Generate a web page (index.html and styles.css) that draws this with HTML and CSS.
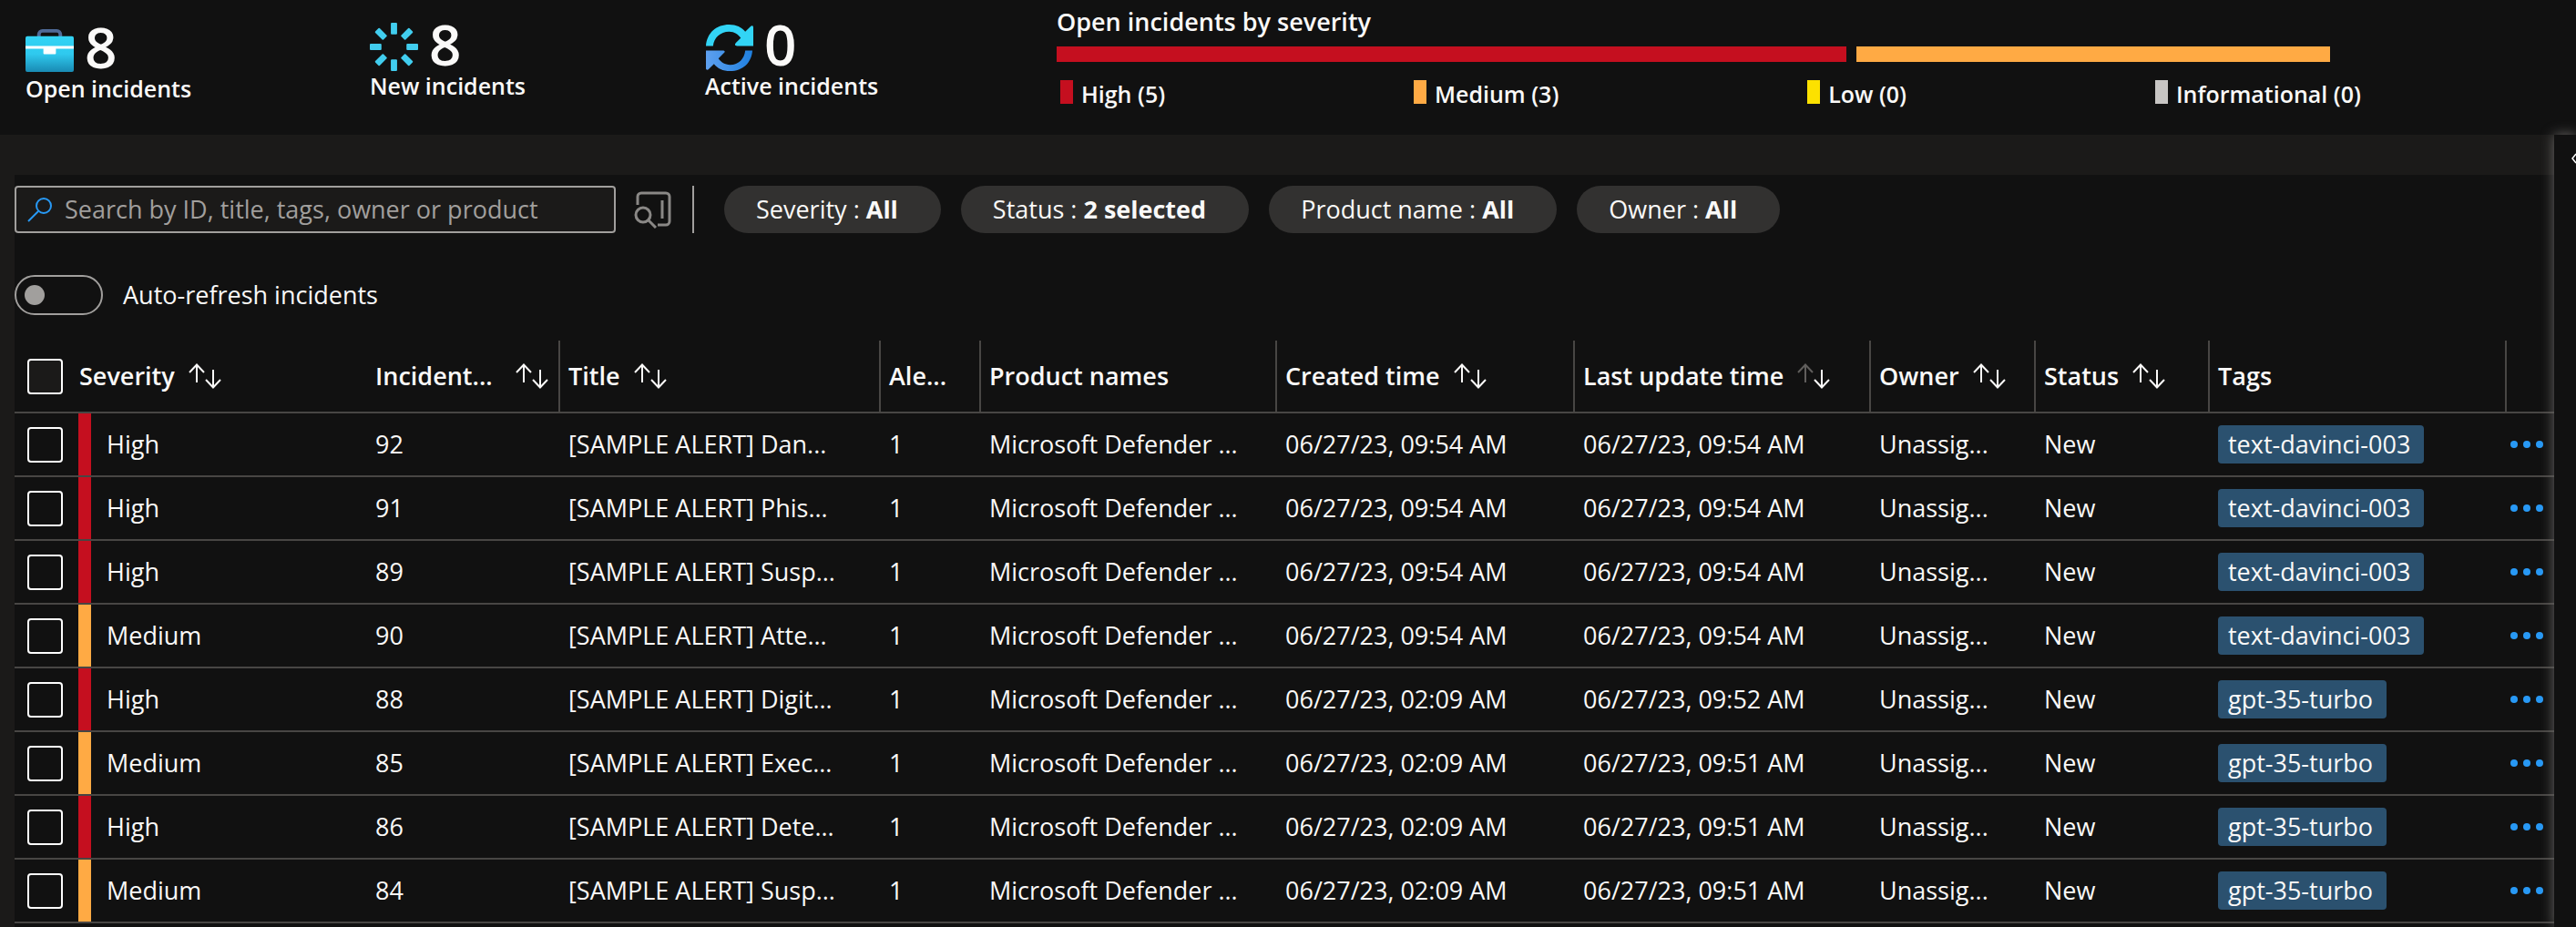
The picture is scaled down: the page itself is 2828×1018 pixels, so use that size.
FILE: index.html
```
<!DOCTYPE html>
<html lang="en">
<head>
<meta charset="utf-8">
<title>Incidents</title>
<link rel="stylesheet" href="styles.css">
</head>
<body>
<svg class="defs" aria-hidden="true">
  <defs>
    <linearGradient id="case-fill" x1="0" y1="0" x2="0" y2="1"><stop offset="0" stop-color="#32d4f5"/><stop offset=".5" stop-color="#2fc9ee"/><stop offset="1" stop-color="#198ab3"/></linearGradient>
    <linearGradient id="cycle-fill" x1="0" y1="0" x2="1" y2="0"><stop offset="0" stop-color="#5ea0ef"/><stop offset="1" stop-color="#1f80e0"/></linearGradient>
    <symbol id="sort-up" viewBox="0 0 18 28"><path d="M9 21V1M1 10L9 1.500L17 10" fill="none" stroke="currentColor" stroke-width="2"/></symbol>
    <symbol id="sort-down" viewBox="0 0 18 28"><path d="M9 7V27M1 18L9 26.500L17 18" fill="none" stroke="currentColor" stroke-width="2"/></symbol>
  </defs>
</svg>
<header class="summary">
  <div class="stat stat-open">
    <div class="stat-top">
      <svg class="stat-icon" viewBox="0 0 54 54"><path d="M15 13V10a4 4 0 0 1 4-4h16a4 4 0 0 1 4 4v3" fill="none" stroke="#4f6a97" stroke-width="4"/><rect x="0" y="12" width="54" height="40" rx="2" fill="url(#case-fill)"/><path d="M0 23h54v3H34v5a1 1 0 0 1-1 1H21a1 1 0 0 1-1-1v-5H0z" fill="#fff"/></svg>
      <span class="stat-value">8</span>
    </div>
    <div class="stat-label">Open incidents</div>
  </div>
  <div class="stat stat-new">
    <div class="stat-top">
      <svg class="stat-icon" viewBox="0 0 54 54"><g fill="#41cdee"><rect x="23.500" y="0" width="7" height="13" rx="1"/><rect x="23.500" y="41" width="7" height="13" rx="1"/><rect x="0" y="23.500" width="13" height="7" rx="1"/><rect x="41" y="23.500" width="13" height="7" rx="1"/><g transform="rotate(45 27 27)"><rect x="23.500" y="0" width="7" height="13" rx="1"/><rect x="23.500" y="41" width="7" height="13" rx="1"/><rect x="0" y="23.500" width="13" height="7" rx="1"/><rect x="41" y="23.500" width="13" height="7" rx="1"/></g></g></svg>
      <span class="stat-value">8</span>
    </div>
    <div class="stat-label">New incidents</div>
  </div>
  <div class="stat stat-active">
    <div class="stat-top">
      <svg class="stat-icon" viewBox="0 0 54 54"><path d="M1 26C2 11 13 2 27 2c8 0 14 3 18 8l6-6c1-1 3-1 3 1v21H36c-3 0-3-2-1-4l5-5c-3-4-7-7-13-7C17 10 10 17 9 26z" fill="#32d4f5"/><path d="M53 31C52 45 42 54 28 54c-8 0-14-3-18-8l-6 6c-1 1-3 1-3-1V31h19c2 0 3 1 1 3l-6 6c3 4 7 7 13 7 10 0 16-7 17-16z" fill="url(#cycle-fill)"/></svg>
      <span class="stat-value">0</span>
    </div>
    <div class="stat-label">Active incidents</div>
  </div>
  <section class="severity">
    <h2 class="severity-title">Open incidents by severity</h2>
    <div class="severity-bar"><div class="bar-part high" style="flex-grow:5"></div><div class="bar-part medium" style="flex-grow:3"></div></div>
    <ul class="legend">
      <li><i class="swatch high"></i>High (5)</li>
      <li><i class="swatch medium"></i>Medium (3)</li>
      <li><i class="swatch low"></i>Low (0)</li>
      <li><i class="swatch info"></i>Informational (0)</li>
    </ul>
  </section>
</header>
<div class="body">
  <main class="panel">
    <div class="toolbar">
      <label class="search">
        <svg class="search-icon" viewBox="0 0 28 28"><g fill="none" stroke="#2899f5" stroke-width="2"><circle cx="18" cy="10" r="8"/><path d="M12 16L1 27"/></g></svg>
        <input type="text" aria-label="Search incidents" placeholder="Search by ID, title, tags, owner or product">
      </label>
      <button class="search-panel" type="button" aria-label="Advanced search"><svg viewBox="0 0 42 42"><g fill="none" stroke="#8a8886" stroke-width="3"><path d="M4 16V7a4 4 0 0 1 4-4h27a4 4 0 0 1 4 4v27a4 4 0 0 1-4 4H26M31 11v20"/><circle cx="10" cy="27" r="8"/><path d="M16 33l8 8"/></g></svg></button>
      <div class="divider"></div>
      <div class="filters">
        <button class="pill" type="button">Severity : <b>All</b></button>
        <button class="pill" type="button">Status : <b>2 selected</b></button>
        <button class="pill" type="button">Product name : <b>All</b></button>
        <button class="pill" type="button">Owner : <b>All</b></button>
      </div>
    </div>
    <label class="auto-refresh"><input type="checkbox" role="switch" class="switch">Auto-refresh incidents</label>
    <table class="grid">
      <colgroup><col class="c-check"><col class="c-sev"><col class="c-id"><col class="c-title"><col class="c-alerts"><col class="c-product"><col class="c-created"><col class="c-updated"><col class="c-owner"><col class="c-status"><col class="c-tags"><col class="c-more"></colgroup>
      <thead><tr>
        <th class="check"><input type="checkbox" class="box head-box" aria-label="Select all"></th>
        <th class="sev-head"><span class="th-in">Severity <button class="sort" type="button" aria-label="Sort"><svg><use href="#sort-up"/></svg><svg><use href="#sort-down"/></svg></button></span></th>
        <th class="split"><span class="th-in wide">Incident... <button class="sort" type="button" aria-label="Sort"><svg><use href="#sort-up"/></svg><svg><use href="#sort-down"/></svg></button></span></th>
        <th class="split"><span class="th-in">Title <button class="sort" type="button" aria-label="Sort"><svg><use href="#sort-up"/></svg><svg><use href="#sort-down"/></svg></button></span></th>
        <th class="split">Ale...</th>
        <th class="split">Product names</th>
        <th class="split"><span class="th-in">Created time <button class="sort" type="button" aria-label="Sort"><svg><use href="#sort-up"/></svg><svg><use href="#sort-down"/></svg></button></span></th>
        <th class="split"><span class="th-in">Last update time <button class="sort sorted" type="button" aria-label="Sort"><svg><use href="#sort-up"/></svg><svg><use href="#sort-down"/></svg></button></span></th>
        <th class="split"><span class="th-in">Owner <button class="sort" type="button" aria-label="Sort"><svg><use href="#sort-up"/></svg><svg><use href="#sort-down"/></svg></button></span></th>
        <th class="split"><span class="th-in">Status <button class="sort" type="button" aria-label="Sort"><svg><use href="#sort-up"/></svg><svg><use href="#sort-down"/></svg></button></span></th>
        <th class="split">Tags</th>
        <th></th>
      </tr></thead>
      <tbody id="rows"></tbody>
    </table>
  </main>
  <aside class="drawer"><button type="button" class="expand" aria-label="Expand details"><svg viewBox="0 0 12 12"><path d="M5 1L1 6l4 5M10 1L6 6l4 5" fill="none" stroke="#fff" stroke-width="1.500"/></svg></button></aside>
</div>
<script src="rows.js"></script>
</body>
</html>
```
FILE: styles.css
```
* { box-sizing: border-box; }
body { margin: 0; min-height: 100vh; display: flex; flex-direction: column; background: #1b1a19; color: #faf9f8; font: 27px/36px "Open Sans", "Noto Sans", sans-serif; overflow: hidden; }
button, input { font: inherit; color: inherit; }
button { background: none; border: 0; padding: 0; cursor: pointer; }
.defs { position: absolute; width: 0; height: 0; }

.summary { display: flex; height: 148px; background: #111; font-weight: 600; font-size: 25px; line-height: 30px; }
.stat { padding-top: 25px; }
.stat-open { width: 378px; padding: 28px 0 0 28px; }
.stat-new { width: 368px; padding-left: 28px; }
.stat-active { width: 386px; padding-left: 28px; }
.stat-top { display: flex; align-items: flex-start; gap: 12px; height: 54px; }
.stat-icon { width: 53px; height: 53px; }
.stat-value { font-size: 62px; line-height: 46px; }
.stat-label { white-space: nowrap; }
.severity { flex: 1; padding: 6px 270px 0 28px; }
.severity-title { margin: 0; font-size: 27px; line-height: 36px; font-weight: 600; }
.severity-bar { display: flex; gap: 11px; height: 17px; margin-top: 9px; }
.bar-part { flex: 0 0 0; }
.high { background: #c50f1f; }
.medium { background: #ffaa44; }
.low { background: #fce100; }
.info { background: #c8c6c4; }
.legend { display: flex; justify-content: space-between; list-style: none; margin: 20px -34px 0 4px; padding: 0; }
.legend li { display: flex; gap: 9px; white-space: nowrap; }
.swatch { width: 14px; height: 26px; }

.body { flex: 1; display: flex; }
.panel { flex: 1; min-width: 0; margin: 44px 0 0 16px; padding-top: 12px; background: #111; }
.toolbar { display: flex; align-items: center; height: 52px; }
.search { display: flex; align-items: center; gap: 13px; width: 660px; height: 52px; padding: 0 12px; background: #1b1a19; border: 2px solid #a19f9d; border-radius: 4px; }
.search-icon { flex: none; width: 28px; height: 28px; }
.search input { flex: 1; min-width: 0; background: none; border: 0; outline: 0; padding: 0; }
.search input::placeholder { color: #a19f9d; opacity: 1; }
.search-panel { width: 42px; height: 42px; margin: 0 22px 0 20px; }
.search-panel svg { display: block; }
.divider { width: 2px; height: 52px; background: #a19f9d; }
.filters { display: flex; gap: 22px; margin-left: 33px; }
.pill { height: 52px; padding: 0 47px 0 35px; border-radius: 26px; background: #323130; white-space: nowrap; }
.auto-refresh { display: inline-flex; align-items: center; gap: 22px; height: 44px; margin-top: 46px; }
.switch { appearance: none; display: flex; align-items: center; width: 97px; height: 44px; margin: 0; padding-left: 9px; border: 2px solid #a19f9d; border-radius: 22px; }
.switch::before { content: ""; width: 22px; height: 22px; border-radius: 50%; background: #a19f9d; }

.grid { width: 100%; margin-top: 28px; table-layout: fixed; border-collapse: separate; border-spacing: 0; }
.c-check { width: 70px; }
.c-sev { width: 317px; }
.c-id { width: 212px; }
.c-title { width: 352px; }
.c-alerts { width: 110px; }
.c-product { width: 325px; }
.c-created { width: 327px; }
.c-updated { width: 325px; }
.c-owner { width: 181px; }
.c-status { width: 191px; }
.c-tags { width: 326px; }
th, td { padding: 0 0 0 9px; height: 70px; text-align: left; white-space: nowrap; border-bottom: 2px solid #484644; }
th { height: 80px; font-weight: 600; }
th.split { border-right: 2px solid #484644; }
.th-in { display: flex; align-items: center; gap: 15px; }
.wide { justify-content: space-between; padding-right: 11px; }
.sort { display: flex; height: 28px; }
.sort svg { width: 18px; height: 28px; }
.sorted svg:first-child { color: #605e5c; }
.check { padding-left: 14px; }
.sev-head { padding-left: 1px; }
.sev { padding: 0; }
.sev-in { display: flex; align-items: center; gap: 17px; }
.mark { width: 14px; height: 68px; }
.box { appearance: none; display: block; width: 39px; height: 39px; margin: 0; border: 2px solid #fff; border-radius: 4px; }
.head-box { background: #1b1a19; }
.tag { display: inline-block; height: 42px; padding: 0 15px 0 11px; border-radius: 4px; background: #2b516f; line-height: 42px; vertical-align: middle; }
.more { display: flex; gap: 6px; }
.more i { width: 8px; height: 8px; border-radius: 50%; background: #2899f5; }
.more-cell { padding-left: 4px; }

.drawer { flex: none; width: 24px; overflow-x: clip; overflow-clip-margin: 20px; background: #111; box-shadow: 0 0 14px #6b6967; }
.expand { display: block; margin: 20px 0 0 19px; width: 12px; height: 12px; }
.expand svg { display: block; }
```
FILE: rows.js
```
const incidents = [
  ["High", 92, "Dan...", "09:54", "09:54", "text-davinci-003"],
  ["High", 91, "Phis...", "09:54", "09:54", "text-davinci-003"],
  ["High", 89, "Susp...", "09:54", "09:54", "text-davinci-003"],
  ["Medium", 90, "Atte...", "09:54", "09:54", "text-davinci-003"],
  ["High", 88, "Digit...", "02:09", "09:52", "gpt-35-turbo"],
  ["Medium", 85, "Exec...", "02:09", "09:51", "gpt-35-turbo"],
  ["High", 86, "Dete...", "02:09", "09:51", "gpt-35-turbo"],
  ["Medium", 84, "Susp...", "02:09", "09:51", "gpt-35-turbo"]
];
document.getElementById("rows").innerHTML = incidents.map(([sev, id, title, created, updated, tag]) => `
  <tr>
    <td class="check"><input type="checkbox" class="box" aria-label="Select incident ${id}"></td>
    <td class="sev"><div class="sev-in"><i class="mark ${sev.toLowerCase()}"></i>${sev}</div></td>
    <td>${id}</td>
    <td>[SAMPLE ALERT] ${title}</td>
    <td>1</td>
    <td>Microsoft Defender ...</td>
    <td>06/27/23, ${created} AM</td>
    <td>06/27/23, ${updated} AM</td>
    <td>Unassig...</td>
    <td>New</td>
    <td><span class="tag">${tag}</span></td>
    <td class="more-cell"><button type="button" class="more" aria-label="More actions"><i></i><i></i><i></i></button></td>
  </tr>`).join("");
```
